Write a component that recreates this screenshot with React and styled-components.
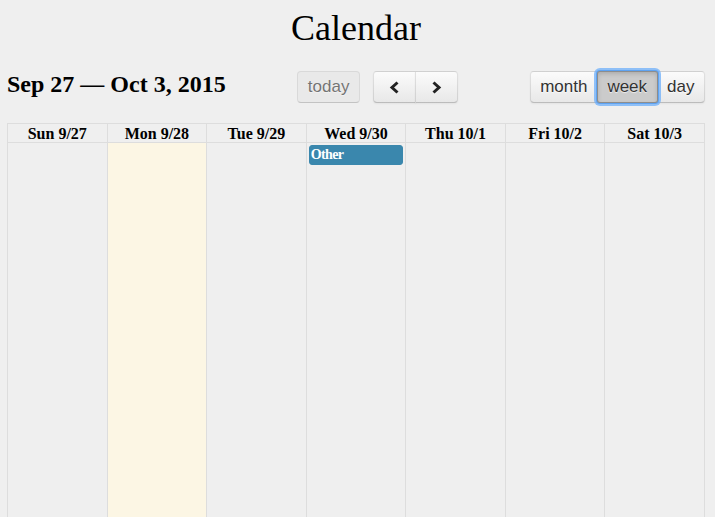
import React from "react";
import styled, { createGlobalStyle, css } from "styled-components";

const GlobalStyle = createGlobalStyle`
  html, body { margin: 0; padding: 0; background: #efefef; }
  body { font-family: "Liberation Serif", "Times New Roman", serif; color: #000; }
`;

const Page = styled.div`
  width: 698px;
  padding: 0 10px 0 7px;
`;

const Title = styled.h1`
  margin: 0;
  padding-top: 10px;
  font-size: 36px;
  font-weight: normal;
  line-height: 36px;
  text-align: center;
`;

const Toolbar = styled.div`
  display: flex;
  align-items: flex-start;
  margin-top: 25px;
  margin-bottom: 20px;
`;

const RangeTitle = styled.h2`
  margin: 0;
  font-size: 24px;
  font-weight: bold;
  line-height: 26px;
`;

const Center = styled.div`
  flex: 1;
  display: flex;
  justify-content: center;
  gap: 13px;
`;

const Group = styled.div`
  display: flex;
`;

const Button = styled.button`
  position: relative;
  height: 32px;
  padding: 0 9.5px;
  margin: 0;
  margin-left: -1px;
  &:first-child { margin-left: 0; }
  font-family: "Liberation Sans", Arial, sans-serif;
  font-size: 17px;
  color: #333;
  display: flex;
  align-items: center;
  justify-content: center;
  background-color: #f5f5f5;
  background-image: linear-gradient(to bottom, #fbfbfb, #e8e8e8);
  border: 1px solid;
  border-color: rgba(0,0,0,.1) rgba(0,0,0,.1) rgba(0,0,0,.25);
  box-shadow: inset 0 1px 0 rgba(255,255,255,.2), 0 1px 2px rgba(0,0,0,.05);
  text-shadow: 0 1px 1px rgba(255,255,255,.75);
  border-radius: 0;
  &:first-child { border-top-left-radius: 4px; border-bottom-left-radius: 4px; }
  &:last-child { border-top-right-radius: 4px; border-bottom-right-radius: 4px; }
  ${(p) => p.$disabled && css`
    opacity: .65;
    background-image: none;
    background-color: #e6e6e6;
    box-shadow: none;
  `}
  ${(p) => p.$active && css`
    z-index: 2;
    background-color: #cbcbcb;
    background-image: none;
    border-color: rgba(0,0,0,.3);
    box-shadow: inset 0 2px 4px rgba(0,0,0,.15), 0 0 0 1px rgba(90,160,240,.9), 0 0 0 3px rgba(110,175,250,.75);
    border-radius: 3px !important;
  `}
  ${(p) => p.$icon && css`
    width: 43px;
    padding: 0;
  `}
`;

const Chevron = ({ dir }) => (
  <svg width="11" height="13" viewBox="0 0 11 13" aria-hidden="true">
    <polyline
      points={dir === "left" ? "8.5,1.5 3,6.5 8.5,11.5" : "2.5,1.5 8,6.5 2.5,11.5"}
      fill="none"
      stroke="#222"
      strokeWidth="3"
      strokeLinecap="butt"
      strokeLinejoin="miter"
    />
  </svg>
);

const Grid = styled.div`
  display: grid;
  grid-template-columns: repeat(7, 1fr);
  grid-template-rows: 19px 1fr;
  height: 400px;
  border-top: 1px solid #ddd;
  border-right: 1px solid #ddd;
`;

const HeadCell = styled.div`
  border-left: 1px solid #ddd;
  border-bottom: 1px solid #ddd;
  text-align: center;
  font-weight: bold;
  font-size: 16px;
  line-height: 16px;
  padding-top: 2px;
  box-sizing: border-box;
`;

const DayCol = styled.div`
  border-left: 1px solid #ddd;
  background: ${(p) => (p.$today ? "#fcf6e4" : "transparent")};
  padding: 2px 2px 0;
  min-height: 380px;
`;

const Event = styled.div`
  height: 20px;
  box-sizing: border-box;
  background: #3a87ad;
  border: 1px solid #3a87ad;
  border-radius: 3px;
  color: #fff;
  font-size: 14px;
  font-weight: bold;
  letter-spacing: -0.6px;
  line-height: 16px;
  padding: 1px 1px 0;
`;

const days = [
  { label: "Sun 9/27" },
  { label: "Mon 9/28", today: true },
  { label: "Tue 9/29" },
  { label: "Wed 9/30", events: ["Other"] },
  { label: "Thu 10/1" },
  { label: "Fri 10/2" },
  { label: "Sat 10/3" },
];

export default function App() {
  return (
    <>
      <GlobalStyle />
      <Page>
        <Title>Calendar</Title>
        <Toolbar>
          <RangeTitle>Sep 27 — Oct 3, 2015</RangeTitle>
          <Center>
            <Group>
              <Button $disabled>today</Button>
            </Group>
            <Group>
              <Button $icon aria-label="prev"><Chevron dir="left" /></Button>
              <Button $icon aria-label="next"><Chevron dir="right" /></Button>
            </Group>
          </Center>
          <Group>
            <Button>month</Button>
            <Button $active>week</Button>
            <Button>day</Button>
          </Group>
        </Toolbar>
        <Grid>
          {days.map((d) => (
            <HeadCell key={d.label}>{d.label}</HeadCell>
          ))}
          {days.map((d) => (
            <DayCol key={d.label + "b"} $today={d.today}>
              {(d.events || []).map((e) => (
                <Event key={e}>{e}</Event>
              ))}
            </DayCol>
          ))}
        </Grid>
      </Page>
    </>
  );
}
